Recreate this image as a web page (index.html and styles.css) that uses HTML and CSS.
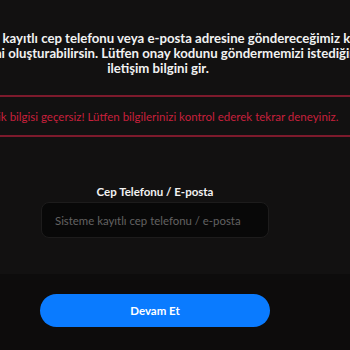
FILE: index.html
```html
<!DOCTYPE html>
<html lang="tr">
<head>
<meta charset="utf-8">
<link rel="stylesheet" href="styles.css">
</head>
<body>
<div class="page">
  <p class="intro">
    <span class="line line-1">Sisteme kayıtlı cep telefonu veya e-posta adresine göndereceğimiz kod</span>
    <span class="line line-2">ile yeni şifreni oluşturabilirsin. Lütfen onay kodunu göndermemizi istediğin</span>
    <span class="line line-3">iletişim bilgini gir.</span>
  </p>
  <div class="error">Kimlik bilgisi geçersiz! Lütfen bilgilerinizi kontrol ederek tekrar deneyiniz.</div>
  <form class="form">
    <label class="label" for="contact">Cep Telefonu / E-posta</label>
    <input class="field" id="contact" type="text" placeholder="Sisteme kayıtlı cep telefonu / e-posta">
    <div class="footer">
      <button class="btn" type="button">Devam Et</button>
    </div>
  </form>
</div>
</body>
</html>
```
FILE: styles.css
```css
html, body {
  margin: 0;
  padding: 0;
  background: #121111;
  overflow: hidden;
  height: 350px;
}
.page {
  width: 700px;
  margin-left: -195px;
  display: flex;
  flex-direction: column;
  align-items: center;
  font-family: Lato, "Noto Sans", sans-serif;
}
.intro {
  box-sizing: border-box;
  width: 700px;
  margin: 31px 0 0;
  color: #f1f1f1;
  font-size: 13.2px;
  font-weight: 700;
  line-height: 15px;
  text-align: center;
  white-space: nowrap;
}
.line {
  display: block;
}
.line-1 {
  padding-left: 8px;
}
.line-2 {
  padding-right: 29px;
}
.line-3 {
  padding-left: 6px;
}
.error {
  box-sizing: border-box;
  width: 700px;
  margin-top: 19px;
  padding-left: 4px;
  height: 42px;
  border-top: 2px solid #7d1a2c;
  border-bottom: 2px solid #7d1a2c;
  display: flex;
  align-items: center;
  justify-content: center;
  color: #c8203c;
  font-size: 11.5px;
  font-weight: 400;
  white-space: nowrap;
}
.form {
  width: 700px;
  display: flex;
  flex-direction: column;
  align-items: center;
  margin-top: 47px;
}
.label {
  color: #f2f2f2;
  font-size: 11.5px;
  font-weight: 700;
  line-height: 16px;
}
.field {
  box-sizing: border-box;
  width: 228px;
  height: 36px;
  margin-top: 2px;
  background: #080808;
  border: 1px solid #1d1c1c;
  border-radius: 8px;
  padding: 0 13px;
  color: #ddd;
  font-family: Lato, "Noto Sans", sans-serif;
  font-size: 11.4px;
  outline: none;
}
.field::placeholder {
  color: #636262;
}
.footer {
  width: 700px;
  margin-top: 36px;
  padding-top: 20px;
  background: #0d0c0c;
  display: flex;
  justify-content: center;
  padding-bottom: 40px;
}
.btn {
  width: 230px;
  height: 33px;
  border: none;
  border-radius: 17px;
  background: #0a7bff;
  color: #fff;
  font-family: Lato, "Noto Sans", sans-serif;
  font-size: 11.5px;
  font-weight: 700;
}
```
